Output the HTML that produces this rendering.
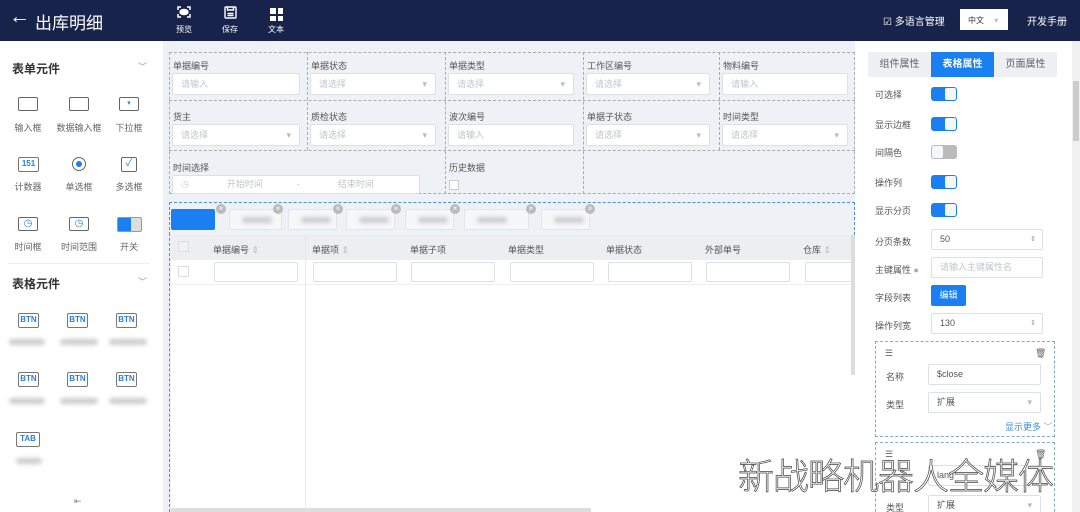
<!DOCTYPE html>
<html style="overflow:hidden;width:1080px;height:512px"><head><meta charset="utf-8"><style>
*{box-sizing:border-box;margin:0;padding:0}
body{width:1080px;height:512px;overflow:hidden;position:relative;background:#fff;font-family:"Liberation Sans","Noto Sans CJK SC",sans-serif;color:#606266;font-size:9px}
.a{position:absolute}
.hdr{left:0;top:0;width:1080px;height:41px;background:#17234b;color:#fff}
.tb{color:#fff;font-size:8px;text-align:center;width:24px}
.side{left:0;top:41px;width:162px;height:471px;background:#fff}
.ic{width:20px;height:14px;border:1.5px solid #666;border-radius:2px}
.lbl{font-size:9px;color:#666;text-align:center;width:50px}
.blur{height:6px;background:#ccc;border-radius:3px;filter:blur(2px);width:38px}
.btn{width:21px;height:15px;border:1.5px solid #777;border-radius:2px;color:#2a7fd4;font-size:8px;font-weight:bold;text-align:center;line-height:12px}
.canvas{left:163px;top:41px;width:692px;height:471px;background:#eef1f6}
.fl{font-size:9px;color:#555}
.inp{height:22px;background:#fff;border:1px solid #dde0e6;border-radius:2px;font-size:9px;color:#c0c4cc;padding-left:8px;line-height:20px}
.dd:after{content:"▾";position:absolute;right:8px;top:0;color:#bbb}
.rp{left:862px;top:41px;width:218px;height:471px;background:#fff;overflow:hidden}
.rl{font-size:9px;color:#555}
.sw{width:26px;height:14px;border-radius:3px;background:#1a7ff0}
.sw:after{content:"";position:absolute;right:1px;top:1px;width:11px;height:12px;background:#f4f6f8;border-radius:2px}
.swo{background:#bbb}
.swo:after{left:1px;right:auto}
.ri{height:21px;border:1px solid #dcdfe6;border-radius:2px;font-size:9px;color:#555;padding-left:8px;line-height:19px}
.th{font-size:9px;color:#555;top:243px}
.chip{top:209px;height:21px;background:#f6f7f9;border:1px solid #e2e4e8;border-radius:2px}
.chip i{position:absolute;left:12px;top:7px;width:30px;height:6px;background:#ccc;filter:blur(2px);border-radius:3px}
.x{width:10px;height:10px;border-radius:50%;background:#bbb;color:#fff;font-size:8px;line-height:10px;text-align:center;top:204px}
.ti{top:262px;height:20px;background:#fff;border:1px solid #dcdfe6;border-radius:2px;width:84px}
</style></head><body>
<div class="a hdr">
 <div class="a" style="left:9px;top:5px;font-size:21px">←</div>
 <div class="a" style="left:35px;top:9px;font-size:17px">出库明细</div>
 <svg class="a" style="left:177px;top:6px" width="14" height="12" viewBox="0 0 14 12" fill="none" stroke="#fff" stroke-width="1.5"><path d="M1 4V1h3M10 1h3v3M1 8v3h3M10 11h3V8"/><ellipse cx="7" cy="6" rx="4" ry="2.5" fill="#fff"/></svg>
 <div class="a tb" style="left:172px;top:24px">预览</div>
 <svg class="a" style="left:224px;top:6px" width="13" height="13" viewBox="0 0 13 13" fill="none" stroke="#fff" stroke-width="1.4"><rect x="1" y="1" width="11" height="11" rx="1"/><path d="M3.5 1v3h6V1M3.5 7.5h6M3.5 9.5h6"/></svg>
 <div class="a tb" style="left:218px;top:24px">保存</div>
 <div class="a" style="left:270px;top:8px;width:13px;height:13px;display:grid;grid-template-columns:5.5px 5.5px;gap:2px"><b style="background:#fff"></b><b style="background:#fff"></b><b style="background:#fff"></b><b style="background:#fff"></b></div><div class="a tb" style="left:264px;top:24px">文本</div>
 <div class="a" style="left:883px;top:13px;font-size:10px">☑ 多语言管理</div>
 <div class="a" style="left:960px;top:9px;width:48px;height:21px;background:#fff;color:#333;font-size:8px;padding:6px 0 0 8px">中文 <span style="color:#bbb;margin-left:8px">▾</span></div>
 <div class="a" style="left:1027px;top:13px;font-size:10px">开发手册</div>
</div>
<div class="a side">
 <div class="a" style="left:12px;top:19px;font-size:12px;font-weight:bold;color:#333">表单元件</div>
 <div class="a" style="left:138px;top:19px;color:#999">﹀</div>
 <div class="a ic" style="left:18px;top:56px"></div><div class="a ic" style="left:69px;top:56px"></div><div class="a ic" style="left:119px;top:56px;font-size:7px;color:#2a7fd4;text-align:center;line-height:11px">▾</div>
 <div class="a lbl" style="left:3px;top:80px">输入框</div><div class="a lbl" style="left:54px;top:80px">数据输入框</div><div class="a lbl" style="left:104px;top:80px">下拉框</div>
 <div class="a btn" style="left:18px;top:116px">151</div>
 <div class="a" style="left:72px;top:116px;width:14px;height:14px;border:1.5px solid #666;border-radius:50%"><div class="a" style="left:2.5px;top:2.5px;width:6px;height:6px;background:#1a7ff0;border-radius:50%"></div></div>
 <div class="a ic" style="left:121px;top:116px;width:16px;height:15px;color:#2a7fd4;font-size:10px;text-align:center;line-height:12px">✓</div>
 <div class="a lbl" style="left:3px;top:139px">计数器</div><div class="a lbl" style="left:54px;top:139px">单选框</div><div class="a lbl" style="left:104px;top:139px">多选框</div>
 <div class="a ic" style="left:18px;top:176px;color:#2a7fd4;font-size:10px;text-align:center;line-height:11px">◷</div><div class="a ic" style="left:69px;top:176px;color:#2a7fd4;font-size:10px;text-align:center;line-height:11px">◷</div>
 <div class="a" style="left:117px;top:176px;width:25px;height:15px;border-radius:2px;background:#ddd;border:1px solid #999"><div class="a" style="left:0;top:0;width:13px;height:13px;background:#1a7ff0"></div></div>
 <div class="a lbl" style="left:3px;top:199px">时间框</div><div class="a lbl" style="left:54px;top:199px">时间范围</div><div class="a lbl" style="left:104px;top:199px">开关</div>
 <div class="a" style="left:8px;top:222px;width:142px;height:1px;background:#eee"></div>
 <div class="a" style="left:12px;top:234px;font-size:12px;font-weight:bold;color:#333">表格元件</div>
 <div class="a" style="left:138px;top:234px;color:#999">﹀</div>
 <div class="a btn" style="left:18px;top:272px">BTN</div><div class="a btn" style="left:67px;top:272px">BTN</div><div class="a btn" style="left:116px;top:272px">BTN</div>
 <div class="a blur" style="left:9px;top:298px;width:36px"></div><div class="a blur" style="left:60px;top:298px"></div><div class="a blur" style="left:109px;top:298px"></div>
 <div class="a btn" style="left:18px;top:331px">BTN</div><div class="a btn" style="left:67px;top:331px">BTN</div><div class="a btn" style="left:116px;top:331px">BTN</div>
 <div class="a blur" style="left:9px;top:357px;width:36px"></div><div class="a blur" style="left:60px;top:357px"></div><div class="a blur" style="left:109px;top:357px"></div>
 <div class="a btn" style="left:16px;top:391px;width:24px">TAB</div>
 <div class="a blur" style="left:16px;top:417px;width:26px"></div>
 <div class="a" style="left:74px;top:455px;color:#888;font-size:9px">⇤</div>
</div>
<div class="a canvas"></div>
<div class="a" style="left:169px;top:52px;width:686px;height:142px;border:1px dashed #aaa"></div>
<div class="a" style="left:169px;top:100px;width:686px;border-top:1px dashed #aaa"></div>
<div class="a" style="left:169px;top:150px;width:686px;border-top:1px dashed #aaa"></div>
<div class="a" style="left:307px;top:52px;height:98px;border-left:1px dashed #aaa"></div>
<div class="a" style="left:445px;top:52px;height:142px;border-left:1px dashed #aaa"></div>
<div class="a" style="left:583px;top:52px;height:142px;border-left:1px dashed #aaa"></div>
<div class="a" style="left:719px;top:52px;height:98px;border-left:1px dashed #aaa"></div>
<div class="a fl" style="left:173px;top:59px">单据编号</div><div class="a inp" style="left:172px;top:73px;width:128px">请输入</div>
<div class="a fl" style="left:311px;top:59px">单据状态</div><div class="a inp dd" style="left:310px;top:73px;width:126px">请选择</div>
<div class="a fl" style="left:449px;top:59px">单据类型</div><div class="a inp dd" style="left:448px;top:73px;width:126px">请选择</div>
<div class="a fl" style="left:587px;top:59px">工作区编号</div><div class="a inp dd" style="left:586px;top:73px;width:124px">请选择</div>
<div class="a fl" style="left:723px;top:59px">物料编号</div><div class="a inp" style="left:722px;top:73px;width:126px">请输入</div>
<div class="a fl" style="left:173px;top:110px">货主</div><div class="a inp dd" style="left:172px;top:124px;width:128px">请选择</div>
<div class="a fl" style="left:311px;top:110px">质检状态</div><div class="a inp dd" style="left:310px;top:124px;width:126px">请选择</div>
<div class="a fl" style="left:449px;top:110px">波次编号</div><div class="a inp" style="left:448px;top:124px;width:126px">请输入</div>
<div class="a fl" style="left:587px;top:110px">单据子状态</div><div class="a inp dd" style="left:586px;top:124px;width:124px">请选择</div>
<div class="a fl" style="left:723px;top:110px">时间类型</div><div class="a inp dd" style="left:722px;top:124px;width:126px">请选择</div>
<div class="a fl" style="left:173px;top:161px">时间选择</div>
<div class="a inp" style="left:172px;top:175px;width:248px;height:19px;line-height:17px"><span style="color:#ccc">◷</span><span style="margin-left:38px">开始时间</span><span style="margin-left:34px">-</span><span style="margin-left:38px">结束时间</span></div>
<div class="a fl" style="left:449px;top:161px">历史数据</div>
<div class="a" style="left:449px;top:180px;width:10px;height:10px;border:1px solid #ccc;background:#fff"></div>
<div class="a" style="left:169px;top:202px;width:686px;height:33px;border:1px dashed #4a8fd6;border-bottom:none"></div>
<div class="a" style="left:169px;top:233px;width:1px;height:279px;border-left:1px dashed #4a8fd6"></div>
<div class="a" style="left:171px;top:209px;width:44px;height:21px;background:#1a7ff0;border-radius:2px"></div>
<div class="a x" style="left:216px">×</div>
<div class="a chip" style="left:229px;width:53px"><i></i></div><div class="a x" style="left:273px">×</div>
<div class="a chip" style="left:288px;width:49px"><i></i></div><div class="a x" style="left:333px">×</div>
<div class="a chip" style="left:346px;width:49px"><i></i></div><div class="a x" style="left:391px">×</div>
<div class="a chip" style="left:405px;width:49px"><i></i></div><div class="a x" style="left:450px">×</div>
<div class="a chip" style="left:464px;width:65px"><i></i></div><div class="a x" style="left:526px">×</div>
<div class="a chip" style="left:541px;width:49px"><i></i></div><div class="a x" style="left:585px">×</div>
<div class="a" style="left:171px;top:235px;width:684px;height:25px;background:#eceef2"></div>
<div class="a" style="left:171px;top:260px;width:684px;height:252px;background:#fff"></div>
<div class="a" style="left:171px;top:284px;width:684px;height:1px;background:#eee"></div>
<div class="a" style="left:305px;top:235px;width:1px;height:277px;background:#e8e8e8"></div>
<div class="a" style="left:178px;top:241px;width:11px;height:11px;border:1px solid #ddd;background:#f0f1f3"></div>
<div class="a" style="left:178px;top:266px;width:11px;height:11px;border:1px solid #ddd"></div>
<div class="a th" style="left:213px">单据编号 <span style="color:#bbb">⇕</span></div>
<div class="a th" style="left:312px">单据项 <span style="color:#bbb">⇕</span></div>
<div class="a th" style="left:410px">单据子项</div>
<div class="a th" style="left:508px">单据类型</div>
<div class="a th" style="left:606px">单据状态</div>
<div class="a th" style="left:705px">外部单号</div>
<div class="a th" style="left:803px">仓库 <span style="color:#bbb">⇕</span></div>
<div class="a ti" style="left:214px"></div><div class="a ti" style="left:313px"></div><div class="a ti" style="left:411px"></div><div class="a ti" style="left:510px"></div><div class="a ti" style="left:608px"></div><div class="a ti" style="left:706px"></div><div class="a ti" style="left:805px;width:50px"></div>
<div class="a" style="left:851px;top:235px;width:4px;height:140px;background:#ddd"></div>
<div class="a" style="left:171px;top:508px;width:420px;height:4px;background:#ddd"></div>
<div class="a rp">
 <div class="a" style="left:6px;top:11px;width:63px;height:25px;background:#eef0f3;font-size:10px;text-align:center;line-height:25px">组件属性</div>
 <div class="a" style="left:69px;top:11px;width:63px;height:25px;background:#1a7ff0;color:#fff;font-size:10px;font-weight:bold;text-align:center;line-height:25px">表格属性</div>
 <div class="a" style="left:132px;top:11px;width:63px;height:25px;background:#eef0f3;font-size:10px;text-align:center;line-height:25px">页面属性</div>
 <div class="a rl" style="left:13px;top:47px">可选择</div><div class="a sw" style="left:69px;top:46px"></div>
 <div class="a rl" style="left:13px;top:77px">显示边框</div><div class="a sw" style="left:69px;top:76px"></div>
 <div class="a rl" style="left:13px;top:105px">间隔色</div><div class="a sw swo" style="left:69px;top:104px"></div>
 <div class="a rl" style="left:13px;top:135px">操作列</div><div class="a sw" style="left:69px;top:134px"></div>
 <div class="a rl" style="left:13px;top:163px">显示分页</div><div class="a sw" style="left:69px;top:162px"></div>
 <div class="a rl" style="left:13px;top:194px">分页条数</div><div class="a ri" style="left:69px;top:188px;width:112px">50<span style="position:absolute;right:6px;top:0;color:#999;font-size:7px">⇕</span></div>
 <div class="a rl" style="left:13px;top:222px">主键属性 <span style="color:#aaa">●</span></div><div class="a ri" style="left:69px;top:216px;width:112px;color:#c0c4cc">请输入主键属性名</div>
 <div class="a rl" style="left:13px;top:250px">字段列表</div><div class="a" style="left:69px;top:244px;width:35px;height:21px;background:#1a7ff0;border-radius:2px;color:#fff;font-size:9px;text-align:center;line-height:21px">编辑</div>
 <div class="a rl" style="left:13px;top:278px">操作列宽</div><div class="a ri" style="left:69px;top:272px;width:112px">130<span style="position:absolute;right:6px;top:0;color:#999;font-size:7px">⇕</span></div>
 <div class="a" style="left:13px;top:300px;width:180px;height:96px;border:1px dashed #8ab"></div>
 <div class="a" style="left:23px;top:307px;color:#666">☰</div><div class="a" style="left:173px;top:307px;color:#666">🗑</div>
 <div class="a rl" style="left:24px;top:329px">名称</div><div class="a ri" style="left:66px;top:323px;width:113px">$close</div>
 <div class="a rl" style="left:24px;top:357px">类型</div><div class="a ri dd" style="left:66px;top:351px;width:113px">扩展</div>
 <div class="a" style="left:143px;top:379px;color:#3a8ee6;font-size:9px">显示更多 <span style="color:#aaa">﹀</span></div>
 <div class="a" style="left:13px;top:401px;width:180px;height:80px;border:1px dashed #8ab"></div>
 <div class="a" style="left:23px;top:408px;color:#666">☰</div><div class="a" style="left:173px;top:408px;color:#666">🗑</div>
 <div class="a" style="left:66px;top:424px;width:113px;height:21px;border:1px solid #dcdfe6;border-radius:2px;font-size:9px;color:#555;padding-left:8px;line-height:19px">lang</div>
 <div class="a rl" style="left:24px;top:460px">类型</div><div class="a ri dd" style="left:66px;top:454px;width:113px">扩展</div>
 <div class="a" style="left:210px;top:0;width:8px;height:471px;background:#f1f1f1"></div>
 <div class="a" style="left:211px;top:40px;width:6px;height:60px;background:#ccc"></div>
</div>
<div class="a" style="left:738px;top:448px;font-size:36px;color:#fff;-webkit-text-stroke:0.7px #444;letter-spacing:-1px;font-family:'Noto Sans CJK SC',sans-serif;font-weight:300;white-space:nowrap">新战略机器人全媒体</div>
</body></html>
